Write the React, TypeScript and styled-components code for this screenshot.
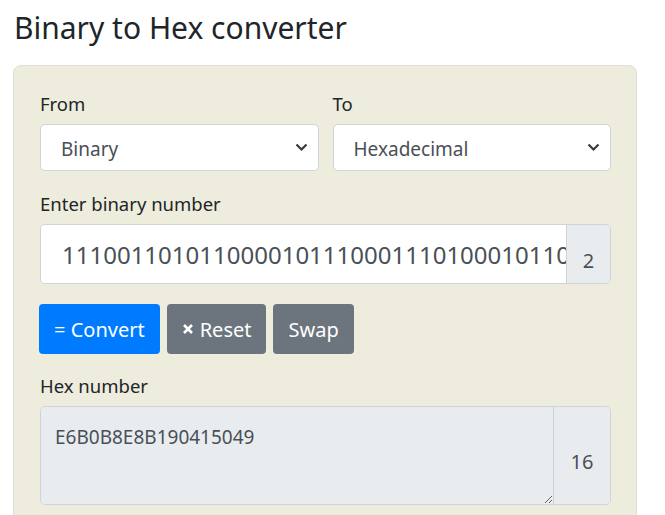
import React from "react";
import styled, { createGlobalStyle } from "styled-components";

const Global = createGlobalStyle`
  html, body { margin: 0; padding: 0; background: #ffffff; }
  body { font-family: "Noto Sans", "Open Sans", sans-serif; color: #212529; }
  * { box-sizing: border-box; }
`;

const Page = styled.div`
  padding: 0 28px 0 13px;
`;

const Title = styled.h1`
  margin: 0;
  padding: 8px 0 0 1px;
  height: 65px;
  font-size: 30px;
  font-weight: 400;
  line-height: 40px;
  color: #212529;
`;

const Card = styled.div`
  background: #eeecdc;
  border: 1px solid #e0ded3;
  border-radius: 8px;
  padding: 24px 25px 40px 26px;
  display: flex;
  flex-direction: column;
`;

const Row = styled.div`
  display: grid;
  grid-template-columns: 1fr 1fr;
  column-gap: 14px;
`;

const Field = styled.div`
  display: flex;
  flex-direction: column;
`;

const Label = styled.label<{ $mt?: number }>`
  font-size: 18.5px;
  line-height: 28px;
  margin-top: ${(p) => p.$mt ?? 0}px;
  margin-bottom: 6px;
  color: #212529;
`;

const SelectWrap = styled.div`
  position: relative;
`;

const Select = styled.select`
  appearance: none;
  width: 100%;
  height: 47px;
  border: 1px solid #ced4da;
  border-radius: 5px;
  background: #ffffff;
  padding: 2px 40px 0 20px;
  font-family: inherit;
  font-size: 19px;
  color: #495057;
  outline: none;
`;

const Chevron = styled.svg`
  position: absolute;
  right: 11px;
  top: 18px;
  width: 13px;
  height: 10px;
  pointer-events: none;
`;

const Group = styled.div<{ $h: number }>`
  display: flex;
  height: ${(p) => p.$h}px;
  border: 1px solid #ced4da;
  border-radius: 5px;
  overflow: hidden;
`;

const Input = styled.input`
  flex: 1;
  min-width: 0;
  border: none;
  outline: none;
  background: #ffffff;
  padding: 0 0 0 21px;
  font-family: inherit;
  font-size: 24px;
  color: #495057;
`;

const TextArea = styled.textarea`
  flex: 1;
  min-width: 0;
  border: none;
  outline: none;
  background: #e9ecef;
  padding: 15px 14px;
  font-family: inherit;
  font-size: 19px;
  line-height: 31px;
  color: #495057;
  resize: vertical;
`;

const Addon = styled.div<{ $w: number }>`
  width: ${(p) => p.$w}px;
  flex: none;
  display: flex;
  align-items: center;
  justify-content: center;
  background: #e9ecef;
  border-left: 1px solid #ced4da;
  font-size: 20px;
  color: #495057;
  padding-top: 12px;
`;

const Buttons = styled.div`
  display: flex;
  gap: 7px;
  margin: 20px 0 0 -1px;
`;

const Button = styled.button<{ $primary?: boolean }>`
  height: 50px;
  border: none;
  border-radius: 4px;
  padding: 0 15px;
  font-family: inherit;
  font-size: 20px;
  color: #ffffff;
  background: ${(p) => (p.$primary ? "#007bff" : "#6c757d")};
  display: flex;
  align-items: center;
  gap: 6px;
`;

export default function App() {
  return (
    <>
      <Global />
      <Page>
        <Title>Binary to Hex converter</Title>
        <Card>
          <Row>
            <Field>
              <Label>From</Label>
              <SelectWrap>
                <Select defaultValue="Binary">
                  <option>Binary</option>
                </Select>
                <Chevron viewBox="0 0 13 10">
                  <path d="M1.5 2.5 L6.5 7.5 L11.5 2.5" fill="none" stroke="#343a40" strokeWidth="2.2" />
                </Chevron>
              </SelectWrap>
            </Field>
            <Field>
              <Label>To</Label>
              <SelectWrap>
                <Select defaultValue="Hexadecimal">
                  <option>Hexadecimal</option>
                </Select>
                <Chevron viewBox="0 0 13 10">
                  <path d="M1.5 2.5 L6.5 7.5 L11.5 2.5" fill="none" stroke="#343a40" strokeWidth="2.2" />
                </Chevron>
              </SelectWrap>
            </Field>
          </Row>
          <Label $mt={19}>Enter binary number</Label>
          <Group $h={60}>
            <Input defaultValue="111001101011000010111000111010001011000110010000010000010101000001001001" />
            <Addon $w={44}>2</Addon>
          </Group>
          <Buttons>
            <Button $primary>= Convert</Button>
            <Button>
              <svg width="12" height="12" viewBox="0 0 12 12">
                <path d="M2 2 L10 10 M10 2 L2 10" stroke="#fff" strokeWidth="2.6" />
              </svg>
              Reset
            </Button>
            <Button>Swap</Button>
          </Buttons>
          <Label $mt={18}>Hex number</Label>
          <Group $h={99}>
            <TextArea readOnly defaultValue="E6B0B8E8B190415049" />
            <Addon $w={57}>16</Addon>
          </Group>
        </Card>
      </Page>
    </>
  );
}
